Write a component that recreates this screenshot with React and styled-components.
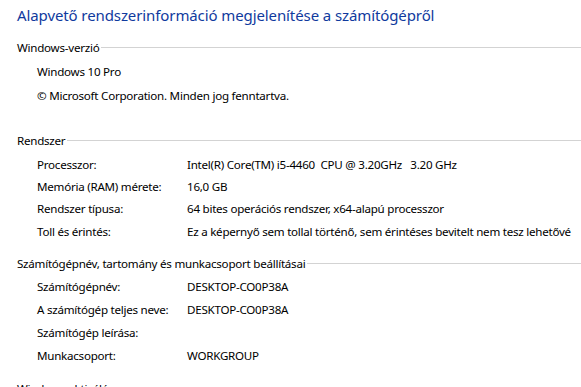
import styled, { createGlobalStyle } from "styled-components";

const GlobalStyle = createGlobalStyle`
  html, body {
    margin: 0;
    padding: 0;
    background: #ffffff;
  }
  body {
    font-family: "Noto Sans", "Open Sans", sans-serif;
    font-size: 11.6px;
    letter-spacing: -0.25px;
    color: #000000;
    overflow: hidden;
  }
`;

const Page = styled.div`
  width: 581px;
  height: 387px;
  overflow: hidden;
  padding-left: 17px;
  box-sizing: border-box;
`;

const Title = styled.h1`
  margin: 0;
  padding-top: 4px;
  height: 24px;
  font-size: 15px;
  font-weight: 400;
  letter-spacing: -0.1px;
  line-height: 22px;
  color: #103a9e;
  white-space: nowrap;
`;

const Section = styled.section`
  margin-top: ${(p) => p.top}px;
`;

const SectionHeader = styled.div`
  display: flex;
  align-items: center;
  height: 22px;
  white-space: nowrap;

  &::after {
    content: "";
    flex: 1;
    height: 1px;
    margin-left: 2px;
    background: #d3d3d3;
  }
`;

const Rows = styled.div`
  padding-left: 20px;
  padding-top: ${(p) => p.pad ?? 2}px;
`;

const Row = styled.div`
  display: flex;
  height: ${(p) => p.h || 23}px;
  align-items: center;
  white-space: nowrap;
`;

const Label = styled.span`
  width: 150px;
  flex-shrink: 0;
`;

const Value = styled.span`
  white-space: pre;
`;

const systemRows = [
  ["Processzor:", "Intel(R) Core(TM) i5-4460  CPU @ 3.20GHz   3.20 GHz"],
  ["Memória (RAM) mérete:", "16,0 GB"],
  ["Rendszer típusa:", "64 bites operációs rendszer, x64-alapú processzor"],
  ["Toll és érintés:", "Ez a képernyő sem tollal történő, sem érintéses bevitelt nem tesz lehetővé"],
];

const computerRows = [
  ["Számítógépnév:", "DESKTOP-CO0P38A"],
  ["A számítógép teljes neve:", "DESKTOP-CO0P38A"],
  ["Számítógép leírása:", ""],
  ["Munkacsoport:", "WORKGROUP"],
];

export default function App() {
  return (
    <>
      <GlobalStyle />
      <Page>
        <Title>Alapvető rendszerinformáció megjelenítése a számítógépről</Title>
        <Section top={8}>
          <SectionHeader>Windows-verzió</SectionHeader>
          <Rows>
            <Row h={23.5}>Windows 10 Pro</Row>
            <Row h={23.5}>© Microsoft Corporation. Minden jog fenntartva.</Row>
          </Rows>
        </Section>
        <Section top={22}>
          <SectionHeader>Rendszer</SectionHeader>
          <Rows>
            {systemRows.map(([label, value]) => (
              <Row key={label} h={22.4}>
                <Label>{label}</Label>
                <Value>{value}</Value>
              </Row>
            ))}
          </Rows>
        </Section>
        <Section top={10}>
          <SectionHeader>Számítógépnév, tartomány és munkacsoport beállításai</SectionHeader>
          <Rows pad={0}>
            {computerRows.map(([label, value]) => (
              <Row key={label} h={23}>
                <Label>{label}</Label>
                <Value>{value}</Value>
              </Row>
            ))}
          </Rows>
        </Section>
        <Section top={11}>
          <SectionHeader>Windows-aktiválás</SectionHeader>
        </Section>
      </Page>
    </>
  );
}
